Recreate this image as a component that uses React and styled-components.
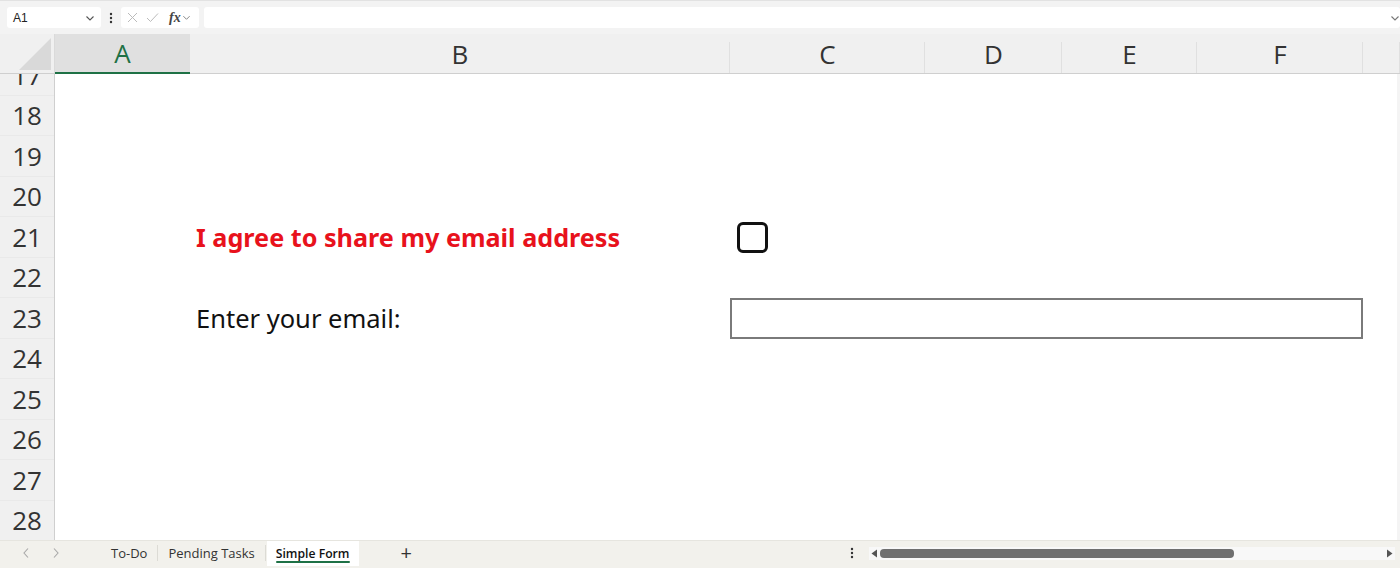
import React from 'react'
import styled, { createGlobalStyle } from 'styled-components'

const GlobalStyle = createGlobalStyle`
	html, body {
		margin: 0;
		padding: 0;
		background: #ffffff;
		overflow: hidden;
	}
	* {
		box-sizing: border-box;
	}
`

const Page = styled.div`
	width: 1400px;
	height: 568px;
	display: flex;
	flex-direction: column;
	font-family: "Open Sans", "Noto Sans", sans-serif;
	background: #f3f3f3;
	overflow: hidden;
`

// ---------- formula bar ----------

const FormulaBar = styled.div`
	height: 34px;
	display: flex;
	align-items: center;
	gap: 5px;
	padding: 0 0 0 7px;
	background: #f3f3f3;
	border-top: 1px solid #e2e2e2;
`

const Box = styled.div`
	height: 21px;
	width: ${props => props.width || 'auto'};
	flex: ${props => props.grow ? 1 : 'none'};
	background: #ffffff;
	border-radius: 3px;
	display: flex;
	align-items: center;
	justify-content: ${props => props.grow ? 'flex-end' : 'flex-start'};
	padding: 0 ${props => props.grow ? 0 : 6}px 0 6px;
	gap: 8px;
	font-size: 12px;
	color: #222;
`

const NameText = styled.span`
	flex: 1;
	font-family: "Liberation Sans", sans-serif;
	font-size: 12px;
`

const FxGroup = styled.span`
	display: flex;
	align-items: center;
	gap: 1px;
`

const Fx = styled.span`
	font-family: "Liberation Serif", serif;
	font-style: italic;
	font-weight: bold;
	font-size: 14px;
	color: #444;
	margin-left: 2px;
`

const Dots = styled.svg`
	flex: none;
	margin: 0 3px;
`

const Chevron = ({ color = '#555', size = 10 }) => (
	<svg width={size} height={size} viewBox="0 0 10 10" style={{ flex: 'none' }}>
		<path d="M1.5 3.5 L5 7 L8.5 3.5" fill="none" stroke={color} strokeWidth="1.1" />
	</svg>
)

const VDots = () => (
	<Dots width="4" height="12" viewBox="0 0 4 12">
		<circle cx="2" cy="2" r="1.2" fill="#333" />
		<circle cx="2" cy="6" r="1.2" fill="#333" />
		<circle cx="2" cy="10" r="1.2" fill="#333" />
	</Dots>
)

// ---------- sheet ----------

const columns = [
	{ name: 'A', width: 135, selected: true },
	{ name: 'B', width: 540 },
	{ name: 'C', width: 195 },
	{ name: 'D', width: 137 },
	{ name: 'E', width: 135 },
	{ name: 'F', width: 166 },
	{ name: '', width: 37 }
]

const rows = [17, 18, 19, 20, 21, 22, 23, 24, 25, 26, 27, 28]

const Sheet = styled.div`
	flex: 1;
	display: flex;
	flex-direction: column;
	overflow: hidden;
	background: #ffffff;
`

const HeaderRow = styled.div`
	height: 40px;
	display: flex;
	background: #f0f0f0;
	border-bottom: 1px solid #cfcfcf;
	flex: none;
`

const Corner = styled.div`
	width: 55px;
	flex: none;
	position: relative;
	border-right: 1px solid #dadada;
	&::after {
		content: '';
		position: absolute;
		right: 3px;
		bottom: 3px;
		width: 32px;
		height: 32px;
		background: #d9d9d9;
		clip-path: polygon(100% 0, 100% 100%, 0 100%);
	}
`

const ColHeader = styled.div`
	width: ${props => props.width}px;
	flex: none;
	display: flex;
	align-items: center;
	justify-content: center;
	font-size: 26px;
	color: ${props => props.selected ? '#1e7145' : '#333'};
	background: ${props => props.selected ? '#e0e0e0' : 'transparent'};
	border-bottom: ${props => props.selected ? '2px solid #1e7145' : 'none'};
	margin-bottom: ${props => props.selected ? '-1px' : '0'};
	position: relative;
	&::after {
		content: '';
		position: absolute;
		right: 0;
		top: 8px;
		bottom: 0;
		width: 1px;
		background: #e0e0e0;
	}
`

const Body = styled.div`
	flex: 1;
	overflow: hidden;
	display: flex;
`

const RowHeaders = styled.div`
	width: 55px;
	flex: none;
	background: #f0f0f0;
	border-right: 1px solid #cfcfcf;
	overflow: hidden;
`

const Scroll = styled.div`
	margin-top: -19px;
`

const RowHeader = styled.div`
	height: 40.5px;
	display: flex;
	align-items: center;
	justify-content: center;
	font-size: 26px;
	color: #333;
	border-bottom: 1px solid #e9e9e9;
`

const Cells = styled.div`
	flex: 1;
	overflow: hidden;
	border-right: 3px solid #f4f4f4;
`

const Grid = styled.div`
	display: grid;
	grid-template-columns: 135px 540px 195px 137px 135px 166px 1fr;
	grid-auto-rows: 40.5px;
`

const Cell = styled.div`
	grid-row: ${props => props.row};
	grid-column: ${props => props.col};
	display: flex;
	align-items: center;
	padding: 0 ${props => props.pad ?? 6}px;
`

const Label = styled.span`
	font-family: "Noto Sans", "Open Sans", sans-serif;
	font-size: ${props => props.bold ? 25.2 : 25.5}px;
	font-weight: ${props => props.bold ? 700 : 400};
	color: ${props => props.color || '#111'};
	letter-spacing: 0;
	white-space: nowrap;
`

const CheckBox = styled.div`
	width: 31px;
	height: 31px;
	border: 3px solid #111;
	border-radius: 6px;
	background: #fff;
`

const EmailInput = styled.div`
	width: 100%;
	height: 41px;
	border: 2px solid #7a7a7a;
	background: #fff;
`

// ---------- sheet tabs ----------

const TabBar = styled.div`
	height: 28px;
	flex: none;
	display: flex;
	align-items: center;
	padding-bottom: 3px;
	background: #f2f1ec;
	font-family: "Open Sans", sans-serif;
	font-size: 13px;
	color: #333;
	border-top: 1px solid #e6e5df;
`

const NavArrows = styled.div`
	display: flex;
	align-items: center;
	gap: 22px;
	padding-left: 22px;
	width: 102px;
`

const Tab = styled.div`
	height: 25px;
	padding: 0 9px;
	display: flex;
	align-items: center;
	position: relative;
	font-size: ${props => props.active ? 12.2 : 13}px;
	font-weight: ${props => props.active ? 600 : 400};
	color: ${props => props.active ? '#111' : '#333'};
	background: ${props => props.active ? '#ffffff' : 'transparent'};
	&::after {
		content: '';
		display: ${props => props.active ? 'block' : 'none'};
		position: absolute;
		left: 9px;
		right: 9px;
		bottom: 3px;
		height: 2px;
		border-radius: 1px;
		background: #1e7145;
	}
`

const Divider = styled.div`
	width: 1px;
	height: 16px;
	background: #dcdbd5;
	margin: 0 1px;
`

const Plus = styled.div`
	margin-left: 42px;
	font-size: 20px;
	color: #333;
	line-height: 1;
`

const Spacer = styled.div`
	flex: 1;
`

const ScrollArea = styled.div`
	display: flex;
	align-items: center;
	width: 543px;
	padding-left: 12px;
	padding-right: 5px;
`

const Track = styled.div`
	flex: 1;
	height: 13px;
	display: flex;
	align-items: center;
	gap: 2px;
	background: #f8f8f8;
	padding: 0 2px 0 2px;
`

const Thumb = styled.div`
	width: 354px;
	height: 9px;
	border-radius: 4px;
	background: #6f6f6f;
`

const Arrow = ({ dir }) => (
	<svg width="7" height="9" viewBox="0 0 7 9" style={{ flex: 'none' }}>
		{dir === 'left'
			? <path d="M6 0.5 L0.5 4.5 L6 8.5 Z" fill="#555" />
			: <path d="M1 0.5 L6.5 4.5 L1 8.5 Z" fill="#555" />}
	</svg>
)

const NavChevron = ({ dir }) => (
	<svg width="8" height="12" viewBox="0 0 8 12" style={{ flex: 'none' }}>
		<path
			d={dir === 'left' ? 'M6 1.5 L2 6 L6 10.5' : 'M2 1.5 L6 6 L2 10.5'}
			fill="none"
			stroke="#a8a8a8"
			strokeWidth="1.1"
		/>
	</svg>
)

export default function App() {
	return (
		<Page>
			<GlobalStyle />
			<FormulaBar>
				<Box width="94px">
					<NameText>A1</NameText>
					<Chevron />
				</Box>
				<VDots />
				<Box width="78px">
					<svg width="11" height="11" viewBox="0 0 11 11">
						<path d="M1 1 L10 10 M10 1 L1 10" stroke="#bbb" strokeWidth="1" />
					</svg>
					<svg width="13" height="11" viewBox="0 0 13 11">
						<path d="M1 6 L4.5 9.5 L12 1.5" fill="none" stroke="#bbb" strokeWidth="1" />
					</svg>
					<FxGroup>
						<Fx>fx</Fx>
						<Chevron color="#888" size={9} />
					</FxGroup>
				</Box>
				<Box grow>
					<Chevron color="#777" />
				</Box>
			</FormulaBar>

			<Sheet>
				<HeaderRow>
					<Corner />
					{columns.map((c, i) => (
						<ColHeader key={i} width={c.width} selected={c.selected}>
							{c.name}
						</ColHeader>
					))}
				</HeaderRow>
				<Body>
					<RowHeaders>
						<Scroll>
							{rows.map(r => <RowHeader key={r}>{r}</RowHeader>)}
						</Scroll>
					</RowHeaders>
					<Cells>
						<Scroll>
							<Grid>
								<Cell row={12} col="1" />
								<Cell row={5} col="2">
									<Label bold color="#e8121c">I agree to share my email address</Label>
								</Cell>
								<Cell row={5} col="3" pad={7}>
									<CheckBox />
								</Cell>
								<Cell row={7} col="2">
									<Label>Enter your email:</Label>
								</Cell>
								<Cell row={7} col="3 / 7" pad={0}>
									<EmailInput />
								</Cell>
							</Grid>
						</Scroll>
					</Cells>
				</Body>
			</Sheet>

			<TabBar>
				<NavArrows>
					<NavChevron dir="left" />
					<NavChevron dir="right" />
				</NavArrows>
				<Tab>To-Do</Tab>
				<Divider />
				<Tab>Pending Tasks</Tab>
				<Divider />
				<Tab active>Simple Form</Tab>
				<Plus>+</Plus>
				<Spacer />
				<VDots />
				<ScrollArea>
					<Track>
						<Arrow dir="left" />
						<Thumb />
						<Spacer />
						<Arrow dir="right" />
					</Track>
				</ScrollArea>
			</TabBar>
		</Page>
	)
}
